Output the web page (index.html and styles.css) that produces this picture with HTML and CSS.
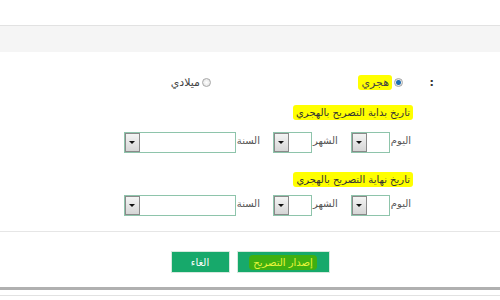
FILE: index.html
```html
<!DOCTYPE html>
<html lang="ar" dir="rtl">
<head>
    <meta charset="UTF-8">
    <title>إصدار التصريح</title>
    <link rel="stylesheet" href="styles.css">
</head>
<body>

<div class="top-bar"></div>
<div class="sub-bar"></div>

<form class="permit-form">
    <div class="choice-row">
        <span class="colon">:</span>
        <label class="choice">
            <input type="radio" name="calendar" value="hijri" checked>
            <span class="mark">هجري</span>
        </label>
        <label class="choice">
            <input type="radio" name="calendar" value="greg">
            <span>ميلادي</span>
        </label>
    </div>

    <div class="date-block">
        <h4><span class="mark">تاريخ بداية التصريح بالهجري</span></h4>
        <div class="date-row">
            <div class="date-part">
                <span class="part-label">اليوم</span>
                <div class="field small"><select></select><span class="drop"></span></div>
            </div>
            <div class="date-part">
                <span class="part-label">الشهر</span>
                <div class="field small"><select></select><span class="drop"></span></div>
            </div>
            <div class="date-part">
                <span class="part-label">السنة</span>
                <div class="field wide"><select></select><span class="drop"></span></div>
            </div>
        </div>
    </div>

    <div class="date-block second">
        <h4><span class="mark">تاريخ نهاية التصريح بالهجري</span></h4>
        <div class="date-row">
            <div class="date-part">
                <span class="part-label">اليوم</span>
                <div class="field small"><select></select><span class="drop"></span></div>
            </div>
            <div class="date-part">
                <span class="part-label">الشهر</span>
                <div class="field small"><select></select><span class="drop"></span></div>
            </div>
            <div class="date-part">
                <span class="part-label">السنة</span>
                <div class="field wide"><select></select><span class="drop"></span></div>
            </div>
        </div>
    </div>

    <div class="form-footer">
        <button type="button" class="btn submit"><span class="btn-mark">إصدار التصريح</span></button>
        <button type="button" class="btn">الغاء</button>
    </div>
</form>

<div class="bottom-line"></div>

</body>
</html>
```

FILE: styles.css
```css
body {
    margin: 0;
    font-family: "DejaVu Sans", sans-serif;
    font-size: 10px;
    color: #333;
    background-color: #fff;
}

.top-bar {
    height: 25px;
    border-bottom: 1px solid #e2e2e2;
}

.sub-bar {
    height: 26px;
    background-color: #f5f5f5;
}

.permit-form {
    margin: 0;
    border-bottom: 3px solid #b0b0b0;
}

.choice-row {
    display: flex;
    align-items: center;
    height: 16px;
    margin-top: 22px;
    padding-right: 66px;
}

.colon {
    width: 3px;
    margin-left: 28px;
    font-weight: bold;
    font-size: 11px;
}

.choice {
    display: flex;
    align-items: center;
    width: 192px;
    color: #444;
    font-size: 11px;
}

.choice input {
    appearance: none;
    width: 9px;
    height: 9px;
    margin: 0 0 0 2px;
    border: 1px solid #a8a8a8;
    border-radius: 50%;
    background: radial-gradient(circle, #fff 0%, #ddd 100%);
}

.choice input:checked {
    background: radial-gradient(circle, #1f6fb5 0, #1f6fb5 2px, #e8e8e8 3px, #cfcfcf 100%);
}

.mark {
    background-color: #ffff00;
    border-radius: 3px;
    padding: 1px 3px;
}

.date-block {
    padding-right: 87px;
    margin-top: 15px;
}

.date-block.second {
    margin-top: 19px;
}

.date-block h4 {
    margin: 0;
    height: 16px;
    font-size: 10px;
    font-weight: normal;
    line-height: 16px;
}

.date-block h4 .mark {
    padding: 2px 3px;
}

.date-row {
    display: flex;
    gap: 13px;
    margin-top: 11px;
    padding-right: 2px;
}

.second .date-row {
    margin-top: 7px;
}

.date-part {
    display: flex;
    align-items: flex-start;
    gap: 1px;
}

.part-label {
    color: #555;
    line-height: 18px;
}

.field {
    display: flex;
    height: 19px;
    border: 1px solid #8ec4ab;
    background-color: #fff;
}

.field.small {
    width: 37px;
}

.field.wide {
    width: 110px;
}

.field select {
    flex: 1;
    min-width: 0;
    border: none;
    appearance: none;
    background: transparent;
}

.drop {
    width: 13px;
    border: 1px solid #8a8a8a;
    background: linear-gradient(#f4f4f4, #d6d6d6);
    display: flex;
    align-items: center;
    justify-content: center;
}

.drop::after {
    content: "";
    border-left: 3px solid transparent;
    border-right: 3px solid transparent;
    border-top: 3px solid #111;
}

.form-footer {
    display: flex;
    justify-content: center;
    gap: 7px;
    margin-top: 15px;
    padding: 19px 0 14px;
    border-top: 1px solid #e6e6e6;
}

.btn {
    height: 22px;
    padding: 0;
    border: 1px solid #d6e9de;
    background-color: #17a96b;
    color: #fff;
    font-family: "DejaVu Sans", sans-serif;
    font-size: 10px;
    width: 59px;
}

.btn.submit {
    width: 93px;
}

.btn-mark {
    background-color: #3fb010;
    color: #e9f53c;
    border-radius: 4px;
    padding: 2px 4px;
}

.bottom-line {
    margin-top: 5px;
    border-top: 1px solid #e2e2e2;
}
```
